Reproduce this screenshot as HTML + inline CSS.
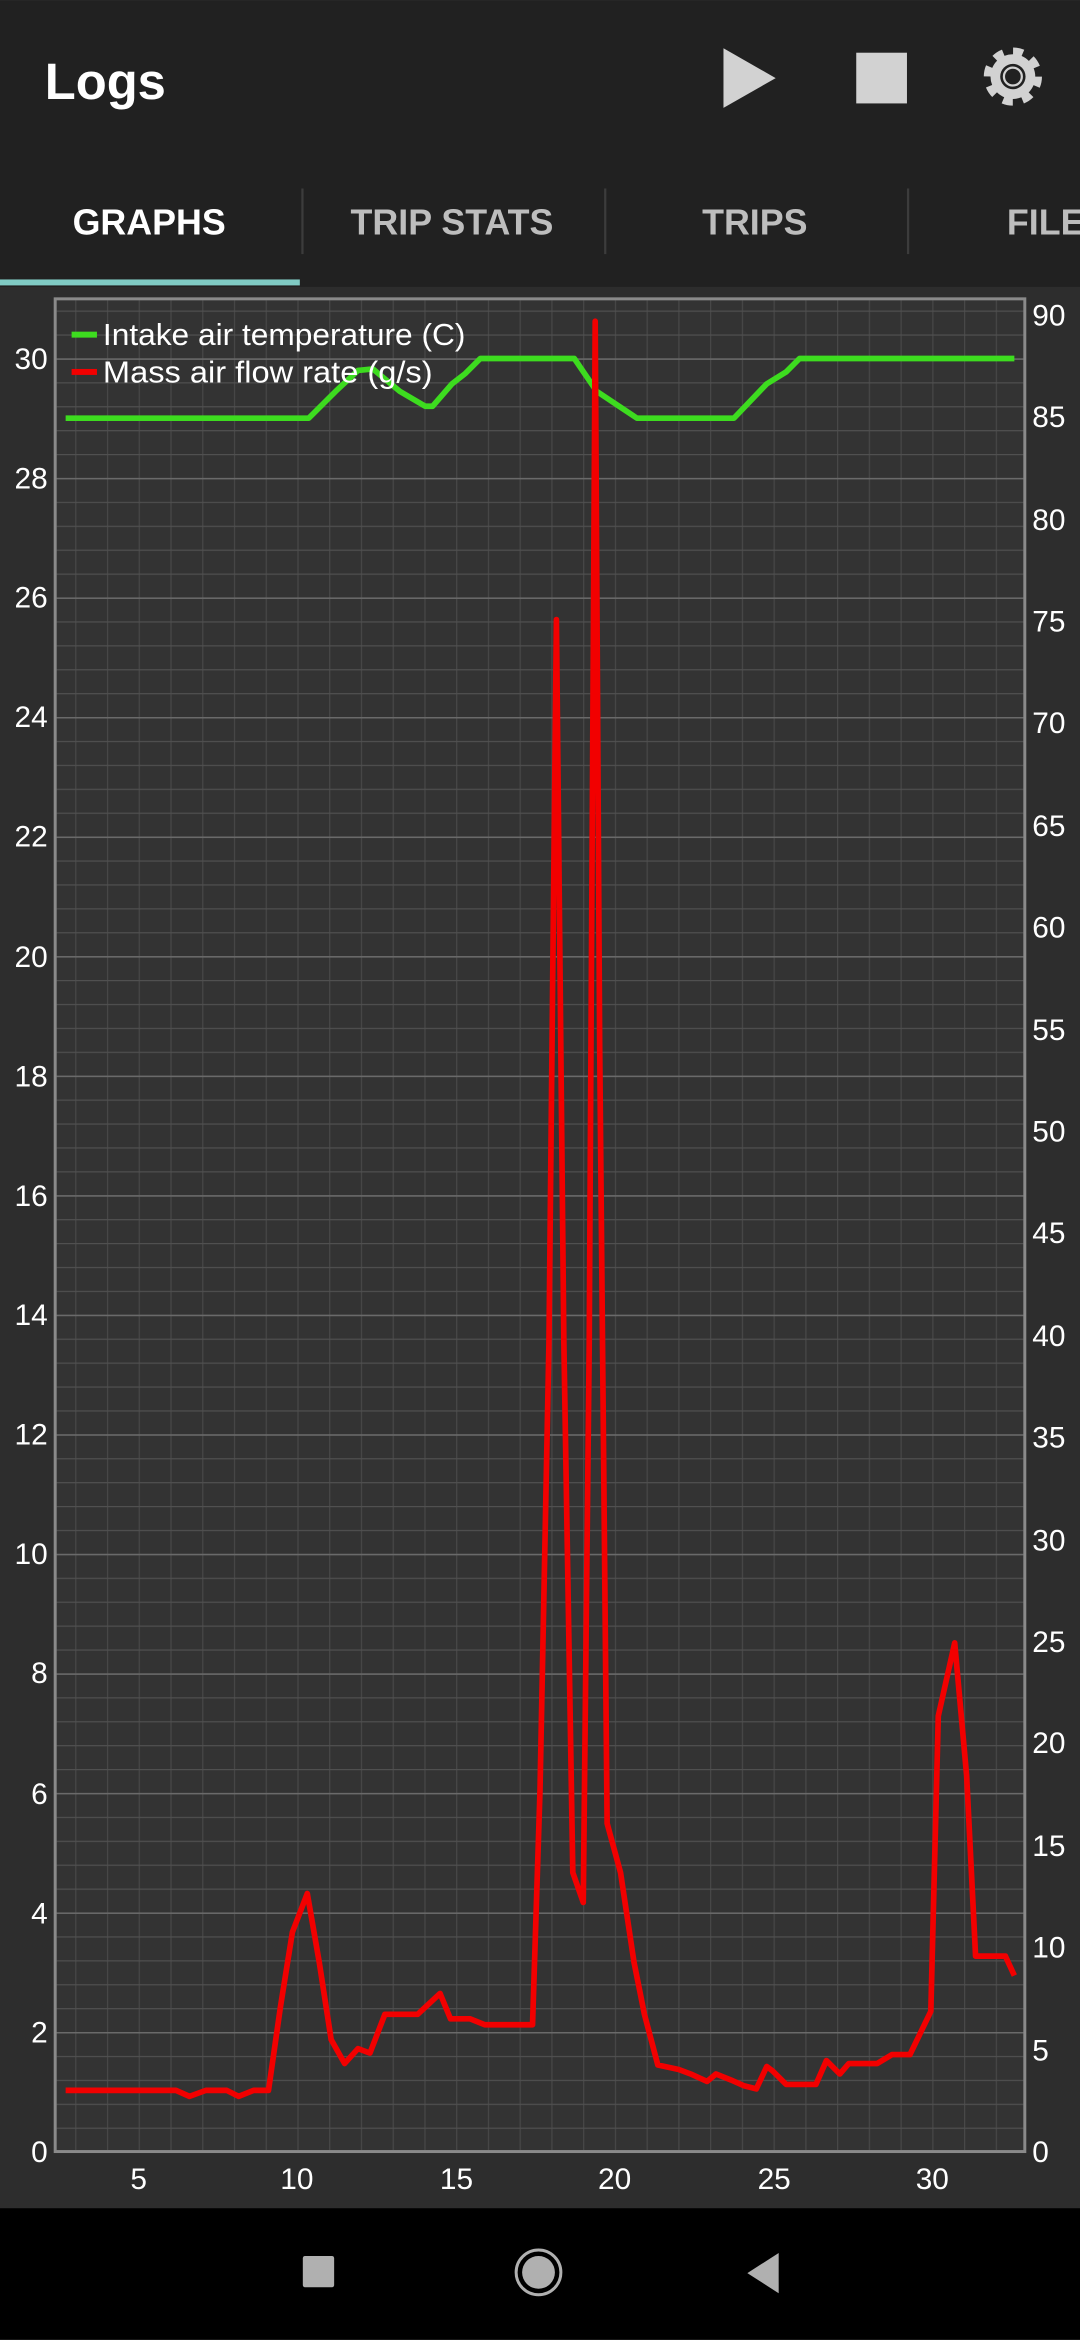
<!DOCTYPE html>
<html><head><meta charset="utf-8"><style>
html,body{margin:0;padding:0;background:#2d2d2d;width:1080px;height:2340px;overflow:hidden}
svg{display:block}
text{font-family:"Liberation Sans",sans-serif}
</style></head><body>
<svg width="1080" height="2340" viewBox="0 0 724 1568" xmlns="http://www.w3.org/2000/svg">
<defs>
<pattern id="gv" patternUnits="userSpaceOnUse" x="50.4" y="0" width="21.28" height="2000"><rect x="0" y="0" width="0.8" height="2000" fill="#484848"/></pattern>
<pattern id="gh" patternUnits="userSpaceOnUse" x="0" y="1442" width="2000" height="16.028"><rect x="0" y="0" width="2000" height="0.8" fill="#505050"/></pattern>
<pattern id="gH" patternUnits="userSpaceOnUse" x="0" y="1442" width="2000" height="80.14"><rect x="0" y="0" width="2000" height="1" fill="#6a6a6a"/></pattern>
<clipPath id="pc"><rect x="38" y="201" width="648" height="1240"/></clipPath>
</defs>
<rect x="0" y="0" width="724" height="192" fill="#212121"/>
<text x="30" y="66" font-size="34" font-weight="bold" fill="#fff">Logs</text>
<path d="M485 32 L520 52 L485 72 Z" fill="#d2d2d2"/>
<rect x="574" y="35" width="34" height="34" fill="#d2d2d2"/>
<g transform="translate(679,51)">
<circle r="15" fill="#d2d2d2"/>
<circle r="16.5" fill="none" stroke="#d2d2d2" stroke-width="6" stroke-dasharray="6.5 6.46"/>
<circle r="8.5" fill="#212121"/>
<circle r="6" fill="none" stroke="#d2d2d2" stroke-width="1.5"/>
</g>
<g font-size="24" font-weight="bold" text-anchor="middle">
<text x="100" y="157" fill="#fff">GRAPHS</text>
<text x="303" y="157" fill="#bdbdbd">TRIP STATS</text>
<text x="506" y="157" fill="#bdbdbd">TRIPS</text>
<text x="709" y="157" fill="#bdbdbd">FILES</text>
</g>
<rect x="202" y="126" width="1.5" height="44" fill="#3c3c3c"/>
<rect x="405" y="126" width="1.5" height="44" fill="#3c3c3c"/>
<rect x="608" y="126" width="1.5" height="44" fill="#3c3c3c"/>
<rect x="0" y="187" width="201" height="4" fill="#80cbc4"/>
<rect x="0" y="192" width="724" height="1288" fill="#2d2d2d"/>
<rect x="37" y="200" width="650" height="1242" fill="#333"/>
<g clip-path="url(#pc)">
<rect x="37" y="200" width="650" height="1242" fill="url(#gv)"/>
<rect x="37" y="200" width="650" height="1242" fill="url(#gh)"/>
<rect x="37" y="200" width="650" height="1242" fill="url(#gH)"/>
<polyline fill="none" stroke="#3ddc1f" stroke-width="3.8" stroke-linejoin="round" points="44,280 207,280 225,262 240,248 250,247 268,262 285,272 290,272 303,257 312,250 322,240 385,240 400,262 415,272 427,280 492,280 514,257 527,249 536,240 680,240"/>
<polyline fill="none" stroke="#f20000" stroke-width="3.8" stroke-linejoin="round" points="44,1401 118,1401 127,1405 138,1401 152,1401 160,1405 170,1401 180,1401 188,1345 196,1295 206,1269 214,1315 222,1367 231,1383 240,1373 248,1376 258,1350 280,1350 295,1336 302,1353 315,1353 325,1357 357,1357 362,1200 368,900 373,415 378,900 384,1255 391,1275 395,900 399,215 402,700 407,1222 416,1255 425,1315 432,1350 441,1384 455,1387 463,1390 474,1395 480,1390 490,1394 499,1398 507,1400 514,1385 518,1388 527,1397 547,1397 554,1381 563,1390 569,1383 588,1383 598,1377 610,1377 624,1348 629,1150 640,1101 648,1190 654,1311 674,1311 680,1324"/>
</g>
<rect x="37" y="200" width="650" height="1242" fill="none" stroke="#8a8a8a" stroke-width="2"/>
<rect x="48" y="222" width="17" height="4" fill="#3ddc1f"/>
<rect x="48" y="247" width="17" height="4" fill="#f20000"/>
<g font-size="20.5" fill="#fff">
<text x="69" y="231" textLength="243" lengthAdjust="spacingAndGlyphs">Intake air temperature (C)</text>
<text x="69" y="256" textLength="221" lengthAdjust="spacingAndGlyphs">Mass air flow rate (g/s)</text>
</g>
<g font-size="20" fill="#fff" text-anchor="end">
<text x="32" y="1449">0</text><text x="32" y="1369">2</text><text x="32" y="1289">4</text><text x="32" y="1209">6</text><text x="32" y="1128">8</text><text x="32" y="1048">10</text><text x="32" y="968">12</text><text x="32" y="888">14</text><text x="32" y="808">16</text><text x="32" y="728">18</text><text x="32" y="648">20</text><text x="32" y="567">22</text><text x="32" y="487">24</text><text x="32" y="407">26</text><text x="32" y="327">28</text><text x="32" y="247">30</text>
</g>
<g font-size="20" fill="#fff">
<text x="692" y="1449">0</text><text x="692" y="1381">5</text><text x="692" y="1312">10</text><text x="692" y="1244">15</text><text x="692" y="1175">20</text><text x="692" y="1107">25</text><text x="692" y="1039">30</text><text x="692" y="970">35</text><text x="692" y="902">40</text><text x="692" y="833">45</text><text x="692" y="765">50</text><text x="692" y="697">55</text><text x="692" y="628">60</text><text x="692" y="560">65</text><text x="692" y="491">70</text><text x="692" y="423">75</text><text x="692" y="355">80</text><text x="692" y="286">85</text><text x="692" y="218">90</text>
</g>
<g font-size="20" fill="#fff" text-anchor="middle">
<text x="93" y="1467">5</text><text x="199" y="1467">10</text><text x="306" y="1467">15</text><text x="412" y="1467">20</text><text x="519" y="1467">25</text><text x="625" y="1467">30</text>
</g>
<rect x="0" y="1480" width="724" height="88" fill="#000"/>
<rect x="203" y="1512" width="21" height="21" rx="1.5" fill="#b0b0b0"/>
<circle cx="361" cy="1523" r="15" fill="none" stroke="#b0b0b0" stroke-width="2"/>
<circle cx="361" cy="1523" r="11" fill="#b0b0b0"/>
<path d="M522 1510 L522 1537 L501 1523.5 Z" fill="#b0b0b0"/>
</svg>
</body></html>
